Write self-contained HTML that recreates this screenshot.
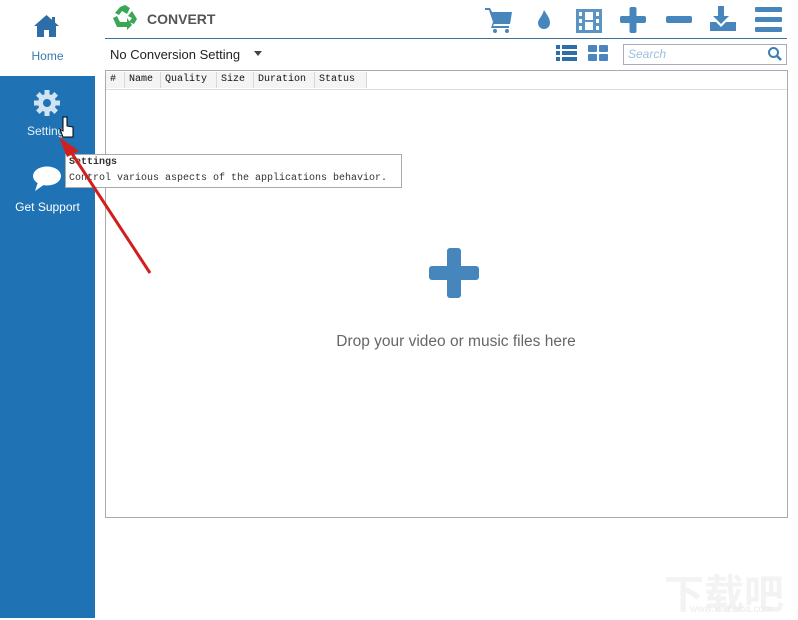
<!DOCTYPE html>
<html><head><style>
body{margin:0;width:798px;height:618px;background:#fff;position:relative;overflow:hidden;font-family:"Liberation Sans",sans-serif}
.abs{position:absolute}
.side{left:0;top:76px;width:95px;height:542px;background:#1f73b5}
.mono{font-family:"Liberation Mono","Noto Sans CJK SC",monospace;font-size:10px;white-space:nowrap}
.th{position:absolute;top:72px;height:16px;border-right:1px solid #d8d8d8;background:#f4f4f4;font-family:"Liberation Mono",monospace;font-size:10px;line-height:16px;padding-left:4px;color:#111;white-space:nowrap}
</style></head><body>
<div class="abs side"></div>
<svg class="abs" style="left:33px;top:14px" width="27" height="24" viewBox="0 0 27 24"><path d="M13.5 1 L1 12 L4 12 L4 23 L11 23 L11 16 L16 16 L16 23 L23 23 L23 12 L26 12 Z" fill="#2e6ea8"/><rect x="19" y="3" width="3" height="6" fill="#2e6ea8"/></svg>
<div class="abs" style="left:0;width:95px;top:49px;text-align:center;color:#3b78b0;font-size:12px">Home</div>
<svg class="abs" style="left:33px;top:89px" width="28" height="28" viewBox="0 0 28 28"><g fill="#d0e3f3"><circle cx="14" cy="14" r="9"/><g stroke="#d0e3f3" stroke-width="5"><line x1="14" y1="1" x2="14" y2="27"/><line x1="1" y1="14" x2="27" y2="14"/><line x1="4.8" y1="4.8" x2="23.2" y2="23.2"/><line x1="23.2" y1="4.8" x2="4.8" y2="23.2"/></g></g><circle cx="14" cy="14" r="4" fill="#1f73b5"/></svg>
<div class="abs" style="left:27px;top:124px;color:#e6f0f8;font-size:12px">Settings</div>
<svg class="abs" style="left:32px;top:166px" width="30" height="26" viewBox="0 0 30 26"><ellipse cx="15" cy="10" rx="14" ry="9.5" fill="#fff"/><path d="M6 16 L3 25 L13 18 Z" fill="#fff"/></svg>
<div class="abs" style="left:0;width:95px;top:200px;text-align:center;color:#fff;font-size:12px">Get Support</div>
<svg class="abs" style="left:111px;top:4px" width="28" height="27" viewBox="0 0 28 27"><g fill="#3aa757"><path d="M9 3 L14 1 L19 4 L16 10 L11 7 L8 11 L4 9 Z"/><path d="M21 7 L26 15 L23 20 L18 18 L21 14 L17 12 Z"/><path d="M2 14 L6 12 L9 18 L16 18 L16 14 L21 21 L16 26 L16 23 L6 23 Z"/></g></svg>
<div class="abs" style="left:147px;top:11px;font-weight:bold;font-size:14px;color:#555">CONVERT</div>
<div class="abs" style="left:105px;top:38px;width:682px;height:1px;background:#3b6f9c"></div>
<svg class="abs" style="left:484px;top:5px" width="300" height="28" viewBox="0 0 300 28">
<g fill="#4686bc">
<path d="M1 3 H6 L8 7 H28 L26 19 H10 L9 21 H25 V23 H7 L9 17 L5 5 H1 Z"/><circle cx="11" cy="26" r="2"/><circle cx="23" cy="26" r="2"/>
<path d="M60 5 C63 10 66 13 66 18 A6 6 0 0 1 54 18 C54 14 58 12 60 5 Z"/>
<path d="M92 4 H118 V28 H92 Z M95 7 V11 H98 V7 Z M95 14 V18 H98 V14 Z M95 21 V25 H98 V21 Z M112 7 V11 H115 V7 Z M112 14 V18 H115 V14 Z M112 21 V25 H115 V21 Z M101 7 V15 H109 V7 Z M101 17 V25 H109 V17 Z" fill-rule="evenodd" fill="#5b93c4"/>
<rect x="136" y="11" width="26" height="7" rx="2"/><rect x="145.5" y="2" width="7" height="26" rx="2"/>
<rect x="182" y="11" width="26" height="7" rx="2"/>
<path d="M234 1 H240 V11 H245 L237 19 L229 11 H234 Z"/><path d="M226 17 H232 L237 22 L242 17 H252 V26 H226 Z"/>
<rect x="271" y="2" width="27" height="5" rx="1"/><rect x="271" y="12" width="27" height="5" rx="1"/><rect x="271" y="22" width="27" height="5" rx="1"/>
</g></svg>
<div class="abs" style="left:110px;top:47px;font-size:13px;color:#222">No Conversion Setting</div>
<div class="abs" style="left:254px;top:51px;width:0;height:0;border-left:4px solid transparent;border-right:4px solid transparent;border-top:5px solid #444"></div>
<svg class="abs" style="left:555px;top:44px" width="56" height="18" viewBox="0 0 56 18"><g fill="#2e6ea8"><rect x="1" y="1" width="4" height="4"/><rect x="7" y="1" width="15" height="4"/><rect x="1" y="7" width="4" height="4"/><rect x="7" y="7" width="15" height="4"/><rect x="1" y="13" width="4" height="4"/><rect x="7" y="13" width="15" height="4"/></g><g fill="#4a86bd"><rect x="33" y="1" width="9" height="7" rx="1"/><rect x="44" y="1" width="9" height="7" rx="1"/><rect x="33" y="10" width="9" height="7" rx="1"/><rect x="44" y="10" width="9" height="7" rx="1"/></g></svg>
<div class="abs" style="left:623px;top:44px;width:162px;height:19px;border:1px solid #aab;"></div>
<div class="abs" style="left:628px;top:47px;font-size:12px;font-style:italic;color:#9bbfdf">Search</div>
<svg class="abs" style="left:767px;top:46px" width="16" height="16" viewBox="0 0 16 16"><circle cx="6.5" cy="6.5" r="4.5" fill="none" stroke="#3c7fb8" stroke-width="2"/><line x1="10" y1="10" x2="14" y2="14" stroke="#3c7fb8" stroke-width="2.5"/></svg>
<div class="abs" style="left:105px;top:70px;width:681px;height:446px;border:1px solid #aaa"></div>
<div class="abs" style="left:106px;top:71px;width:681px;height:18px;border-bottom:1px solid #ddd"></div>
<div class="th" style="left:106px;width:14px">#</div>
<div class="th" style="left:125px;width:31px">Name</div>
<div class="th" style="left:161px;width:51px">Quality</div>
<div class="th" style="left:217px;width:32px">Size</div>
<div class="th" style="left:254px;width:56px">Duration</div>
<div class="th" style="left:315px;width:47px">Status</div>
<svg class="abs" style="left:429px;top:248px" width="50" height="50" viewBox="0 0 50 50"><rect x="0" y="18" width="50" height="14" rx="3" fill="#4686bc"/><rect x="18" y="0" width="14" height="50" rx="3" fill="#4686bc"/></svg>
<div class="abs" style="left:300px;width:312px;top:333px;text-align:center;font-size:15.5px;color:#666">Drop your video or music files here</div>
<div class="abs mono" style="left:65px;top:154px;width:332px;height:32px;background:#fff;border:1px solid #aaa;color:#333;line-height:16px;padding-left:3px"><b>Settings</b><br>Control various aspects of the applications behavior.</div>
<svg class="abs" style="left:55px;top:115px" width="100" height="165" viewBox="0 0 100 165"><line x1="95" y1="158" x2="14" y2="34" stroke="#d01f1f" stroke-width="3"/><path d="M4 22 L24 36 L12 42 Z" fill="#d01f1f"/><path d="M8 2 V16 L5 14 L8 22 H18 V12 L12 11 V2 Z" fill="#fff" stroke="#000" stroke-width="1"/></svg>
<div class="abs" style="left:664px;top:562px;font-size:40px;color:#f3f3f3;font-family:'Noto Sans CJK SC',sans-serif;font-weight:bold">下载吧</div>
<div class="abs" style="left:690px;top:604px;font-size:10px;color:#ececec">www.xiazaiba.com</div>
</body></html>
